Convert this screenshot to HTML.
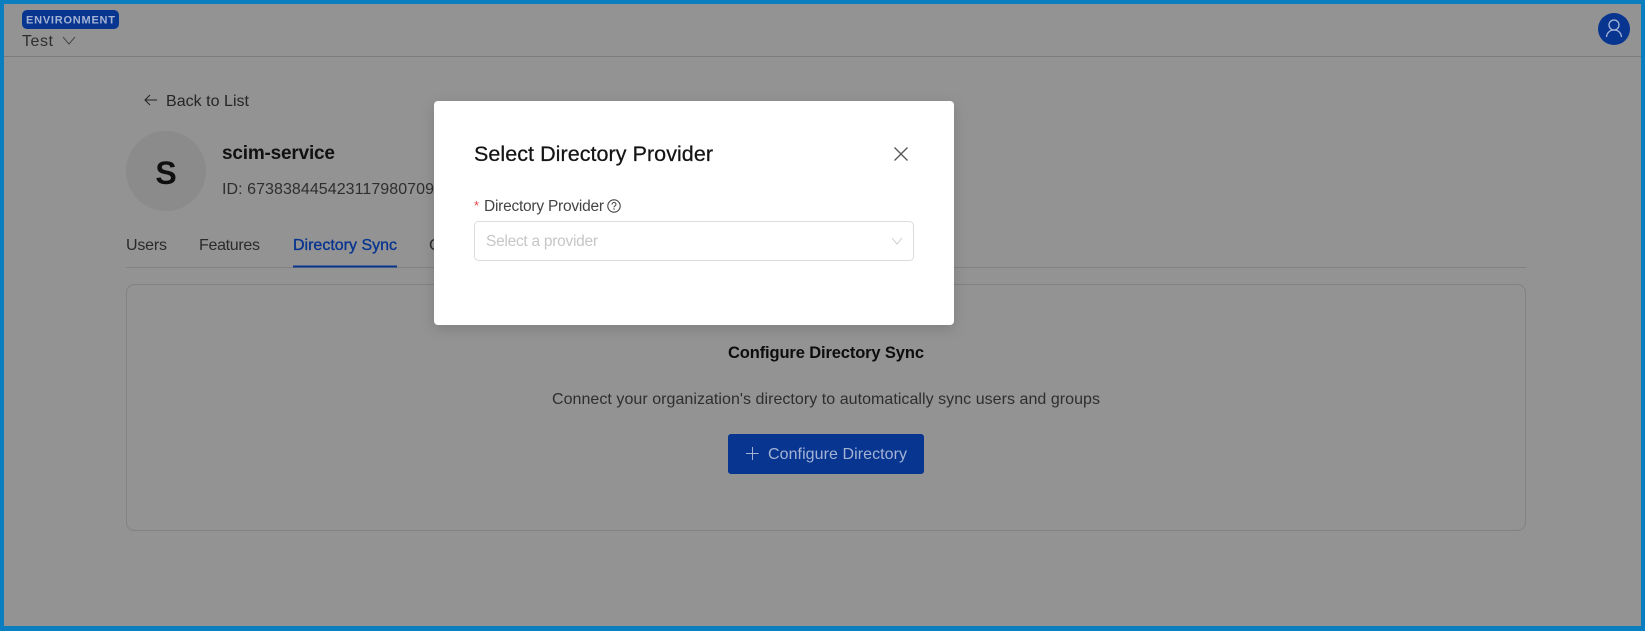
<!DOCTYPE html>
<html><head><meta charset="utf-8"><title>Select Directory Provider</title>
<style>
html,body{margin:0;padding:0;background:#0a7ebf;width:1645px;height:631px;overflow:hidden}
svg{display:block;position:absolute;left:0;top:0}
text{font-family:"Liberation Sans",sans-serif;white-space:pre}
</style></head><body>
<svg width="1645" height="631" viewBox="0 0 1645 631" xmlns="http://www.w3.org/2000/svg">
<defs>
<filter id="sh" x="-10%" y="-20%" width="120%" height="140%"><feDropShadow dx="0" dy="4" stdDeviation="7" flood-color="#000" flood-opacity=".14"/></filter>
<clipPath id="idclip"><rect x="200" y="170" width="234" height="40"/></clipPath>
</defs>
<rect width="1645" height="631" fill="#0a7ebf"/>
<rect x="4" y="4" width="1637" height="622" fill="#939393"/>
<!-- header -->
<rect x="4" y="56" width="1637" height="1" fill="#7c7c7c"/>
<rect x="22" y="10" width="97" height="19" rx="5" fill="#083590"/>
<text x="26" y="23.500" font-size="11" font-weight="700" fill="#a4b3d4" textLength="89">ENVIRONMENT</text>
<text x="22" y="46" font-size="16" fill="#2e2e2e" textLength="31">Test</text>
<path d="M63 37l6 7 6-7" fill="none" stroke="#3a3a3a" stroke-width=".9"/>
<circle cx="1614" cy="29" r="16" fill="#083590"/>
<circle cx="1614" cy="25" r="5" fill="none" stroke="#a9b8d8" stroke-width="1.300"/>
<path d="M1606.500 37c.5-4.500 3.500-7 7.500-7s7 2.500 7.500 7" fill="none" stroke="#a9b8d8" stroke-width="1.300"/>
<!-- back -->
<path d="M157 100h-12M150 95l-5 5 5 5" fill="none" stroke="#222" stroke-width="1"/>
<text x="166" y="106" font-size="16" fill="#262626" textLength="83">Back to List</text>
<!-- avatar -->
<circle cx="166" cy="171" r="40" fill="#8b8b8b"/>
<text x="166" y="184" font-size="32" font-weight="700" fill="#0f0f0f" text-anchor="middle">S</text>
<text x="222" y="159" font-size="19" font-weight="700" fill="#111" textLength="113">scim-service</text>
<g clip-path="url(#idclip)"><text x="222" y="194" font-size="16" fill="#2e2e2e" textLength="212">ID: 673838445423117980709</text></g>
<!-- tabs -->
<text x="126" y="250" font-size="16" fill="#2a2a2a" textLength="41">Users</text>
<text x="199" y="250" font-size="16" fill="#2a2a2a" textLength="61">Features</text>
<text x="293" y="250" font-size="16" fill="#083590" stroke="#083590" stroke-width=".35" textLength="104">Directory Sync</text>
<text x="429" y="250" font-size="16" fill="#2a2a2a">C</text>
<rect x="126" y="267" width="1400" height="1" fill="#828282"/>
<rect x="293" y="265.500" width="104" height="2" fill="#083590"/>
<!-- card -->
<rect x="126.500" y="284.500" width="1399" height="246" rx="8" fill="none" stroke="#828282"/>
<text x="728" y="358" font-size="16.500" font-weight="700" fill="#0d0d0d" textLength="196">Configure Directory Sync</text>
<text x="552" y="404" font-size="16" fill="#2e2e2e" textLength="548">Connect your organization's directory to automatically sync users and groups</text>
<rect x="728" y="434" width="196" height="40" rx="3" fill="#083590"/>
<path d="M746 453.500h12.500M752.500 447v13" stroke="#a4b3d4" stroke-width="1" fill="none"/>
<text x="768" y="459" font-size="16" fill="#a4b3d4" textLength="139">Configure Directory</text>
<!-- modal -->
<rect x="434" y="101" width="520" height="224" rx="4" fill="#fff" filter="url(#sh)"/>
<text x="474" y="161" font-size="21.500" fill="#141414" stroke="#141414" stroke-width=".25" textLength="239">Select Directory Provider</text>
<path d="M894.500 147.500l13 13M907.500 147.500l-13 13" stroke="#555" stroke-width="1.300" fill="none"/>
<text x="474" y="210" font-size="13" fill="#e5484d">*</text>
<text x="484" y="211" font-size="15.500" fill="#444" textLength="120">Directory Provider</text>
<circle cx="614" cy="206" r="6.200" fill="none" stroke="#444" stroke-width="1.100"/>
<path d="M612 204.500c0-1.200.9-2 2-2s2 .8 2 1.900c0 1.500-2 1.500-2 3" fill="none" stroke="#444" stroke-width="1"/>
<circle cx="614" cy="209" r=".7" fill="#444"/>
<rect x="474.500" y="221.500" width="439" height="39" rx="4" fill="#fff" stroke="#dcdcdc"/>
<text x="486" y="246" font-size="15.500" fill="#c6c6c6" textLength="112">Select a provider</text>
<path d="M892 238l5 6 5-6" fill="none" stroke="#cacaca" stroke-width=".9"/>
</svg>
</body></html>
